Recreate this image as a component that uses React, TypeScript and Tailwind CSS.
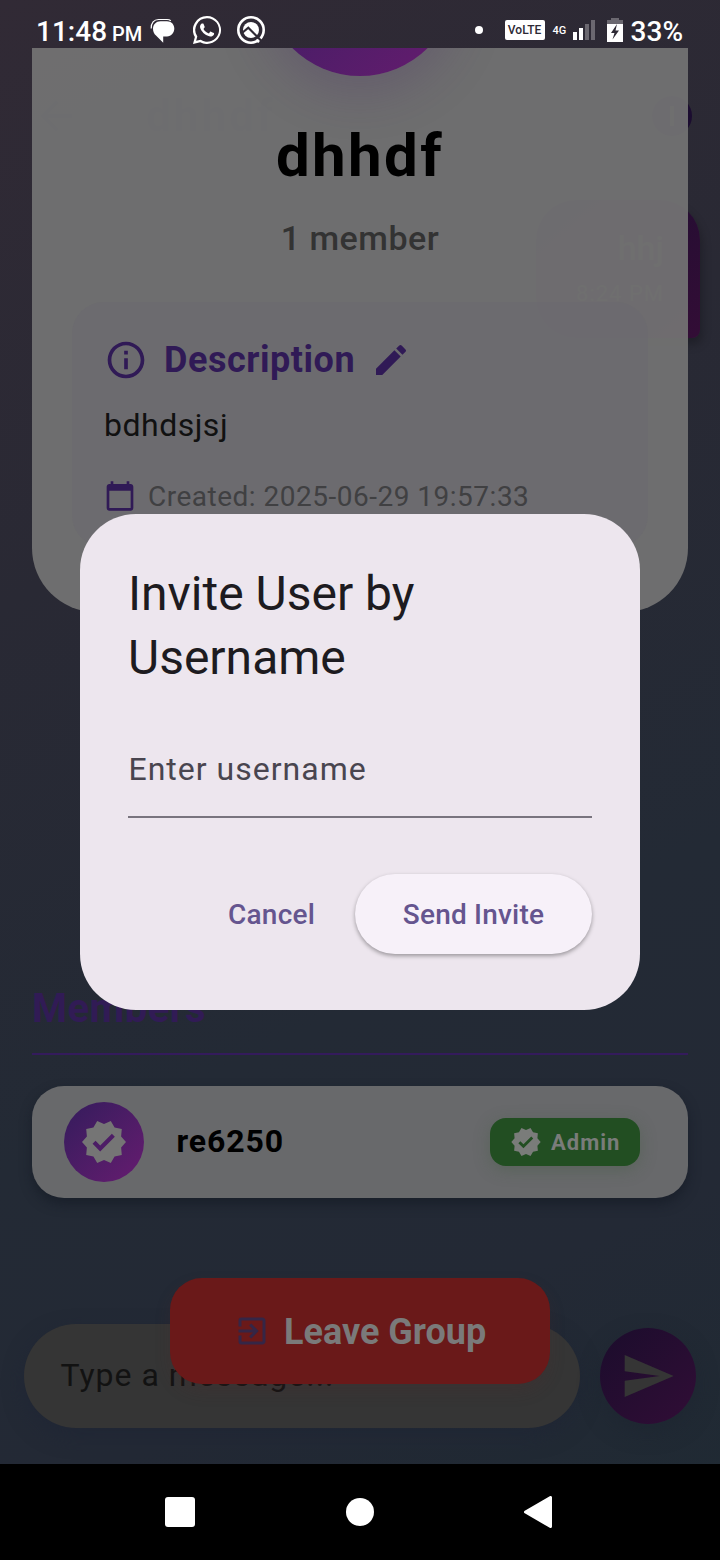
import { MdCalendarToday, MdEdit, MdExitToApp, MdInfoOutline, MdSend, MdVerified, MdArrowBack } from "react-icons/md";

function MessagesIcon() {
  return (
    <svg className="h-7 w-7" viewBox="0 0 28 28" fill="#fff">
      <path d="M2.200 12.500C2 7 5 3.500 9.500 3.500h8.500c1.600 0 2.800.4 3.800 1.200" fill="none" stroke="#fff" strokeWidth="1.200" />
      <path d="M11.500 5.300h6.500c4.300 0 7.300 3.200 7.300 7.200s-3 8-7.300 8h-3.800v6.200L7 19.500C5 17.800 4 15.500 4 12.700c0-4.200 3.200-7.400 7.500-7.400z" />
    </svg>
  );
}

function WhatsAppIcon() {
  return (
    <svg className="h-7 w-7" viewBox="0 0 24 24" fill="#fff">
      <path d="M17.472 14.382c-.297-.149-1.758-.867-2.030-.967-.273-.099-.471-.148-.670.150-.197.297-.767.966-.940 1.164-.173.199-.347.223-.644.075-.297-.150-1.255-.463-2.390-1.475-.883-.788-1.480-1.761-1.653-2.059-.173-.297-.018-.458.130-.606.134-.133.298-.347.446-.520.149-.174.198-.298.298-.497.099-.198.050-.371-.025-.520-.075-.149-.669-1.612-.916-2.207-.242-.579-.487-.500-.669-.510-.173-.008-.371-.010-.570-.010-.198 0-.520.074-.792.372-.272.297-1.040 1.016-1.040 2.479 0 1.462 1.065 2.875 1.213 3.074.149.198 2.096 3.200 5.077 4.487.709.306 1.262.489 1.694.625.712.227 1.360.195 1.871.118.571-.085 1.758-.719 2.006-1.413.248-.694.248-1.289.173-1.413-.074-.124-.272-.198-.570-.347z" />
      <path d="M12 0a12 12 0 0 0-10.400 18L0 24l6.200-1.500A12 12 0 1 0 12 0zm0 1.900a10.100 10.100 0 1 1-5.400 18.500L2.700 21.300 3.700 17.600A10.100 10.100 0 0 1 12 1.900z" />
    </svg>
  );
}

function RingIcon() {
  return (
    <svg className="h-7 w-7" viewBox="0 0 28 28" fill="none">
      <circle cx="14" cy="14" r="12.700" stroke="#fff" strokeWidth="2.600" />
      <circle cx="14" cy="14" r="8" fill="#fff" />
      <path d="M5 17l6.300-5.300L24.500 25" stroke="#2f2a35" strokeWidth="2.200" />
      <path d="M19.500 23.500l2.400 2.800" stroke="#fff" strokeWidth="2" />
    </svg>
  );
}

function StatusBar() {
  return (
    <div className="absolute inset-x-0 top-0 flex h-12 items-start text-white">
      <div className="ml-9 mt-4 flex items-baseline font-medium leading-8">
        <span className="text-[28px]">11:48</span>
        <span className="ml-[5px] text-[20px]">PM</span>
      </div>
      <div className="ml-[7px] mt-4 flex gap-[16px]">
        <MessagesIcon />
        <WhatsAppIcon />
        <RingIcon />
      </div>
      <div className="ml-auto mr-[37px] flex items-center pt-[14px]">
        <div className="mr-[22px] h-2 w-2 rounded-full bg-white" />
        <div className="flex h-5 w-10 items-center justify-center rounded-[2px] bg-white text-[12px] font-medium text-[#2d2934]">VoLTE</div>
        <div className="ml-2 w-[15px] pt-[2px] text-[11px] font-medium">4G</div>
        <svg className="ml-[5px] h-5 w-[22px]" viewBox="0 0 22 20">
          <path d="M0 12h4v8H0zM6 8h4v12H6z" fill="#fff" />
          <path d="M12 4h4v16h-4zM18 0h4v20h-4z" fill="#6b6870" />
        </svg>
        <svg className="ml-3 h-6 w-4" viewBox="0 0 16 24">
          <path d="M4 0h8v2h4v5H0V2h4z" fill="#6b6870" />
          <path d="M0 6h16v18H0z" fill="#fff" />
          <path d="M10 6L4 15h3.500L5.500 21.500 12 12.500H8.500z" fill="#2d2934" />
        </svg>
        <div className="ml-2 pt-1 text-[28px] font-medium leading-7">33%</div>
      </div>
    </div>
  );
}

function ChatScreen() {
  return (
    <div className="absolute inset-0 flex flex-col bg-linear-[155deg,#312a35_0%,#292934_32%,#232a35_62%,#232935_80%,#1f2a33_100%]">
      <div className="mt-[88px] flex h-14 items-center pl-8 pr-7">
        <MdArrowBack className="size-12 text-[#181830]" />
        <span className="ml-[66px] text-[44px] font-bold tracking-[3px] text-[#181838]">dhhdf</span>
        <span className="ml-auto flex size-10 items-center justify-center rounded-full bg-[#1b0c30]">
          <span className="h-5 w-1 bg-[#30303c]" />
        </span>
      </div>
      <div className="ml-auto mr-5 mt-14 flex h-[138px] w-[164px] flex-col items-end rounded-[40px] rounded-br-[8px] bg-linear-to-br from-[#1b0c30] to-[#330d36] pr-9 pt-[26px] text-[#353535] shadow-[2px_6px_10px_rgba(0,0,0,0.25)]">
        <span className="text-[34px] font-medium leading-[44px]">hhj</span>
        <span className="mt-[10px] text-[22px] leading-[28px] tracking-[1px]">8:24 PM</span>
      </div>
      <div className="mt-auto flex h-[140px] items-start pl-6 pr-6">
        <div className="flex h-[104px] w-[556px] items-center rounded-full bg-[#353535] pb-[2px] pl-[36.500px] text-[32px] tracking-[1px] text-[#121212] shadow-[0_8px_20px_rgba(31,38,52,0.8)]">Type a message...</div>
        <div className="ml-5 mt-1 flex size-24 items-center justify-center rounded-full bg-linear-to-br from-[#1b0c2c] to-[#310d36] shadow-[0_8px_20px_rgba(28,36,48,0.6)]">
          <MdSend className="size-14 text-[#353535]" />
        </div>
      </div>
      <div className="h-24 shrink-0" />
    </div>
  );
}

function GroupCard() {
  return (
    <div className="flex h-[564px] flex-col items-center overflow-hidden rounded-b-[64px] bg-[rgba(115,115,115,0.94)] px-10">
      <div className="-mt-[164px] size-[192px] shrink-0 rounded-full bg-linear-to-br from-[#341b62] to-[#661b6e] shadow-[0_16px_48px_rgba(72,40,100,0.25)]" />
      <div className="mt-[44px] text-[60px] font-bold leading-[72px] tracking-[2.400px] text-black">dhhdf</div>
      <div className="mt-[26px] text-[34px] font-medium leading-10 tracking-[0.500px] text-[#333333]">1 member</div>
      <div className="mt-[44px] flex h-[245px] w-full shrink-0 flex-col rounded-[32px] bg-[#6b6a6f]/90 px-8 pt-[33px] text-[#301a56]">
        <div className="flex h-[50px] items-center">
          <MdInfoOutline className="size-11" />
          <span className="ml-4 text-[36px] font-bold tracking-[0.540px]">Description</span>
          <MdEdit className="ml-4 size-10" />
        </div>
        <div className="mt-5 text-[32px] leading-10 tracking-[0.500px] text-[#111111]">bdhdsjsj</div>
        <div className="mt-[35px] flex h-8 items-center">
          <MdCalendarToday className="size-8" />
          <span className="ml-3 pt-[2px] text-[28px] tracking-[0.500px] text-[#404042]">Created: 2025-06-29 19:57:33</span>
        </div>
      </div>
    </div>
  );
}

function GroupSheet() {
  return (
    <div className="absolute inset-x-0 top-12 flex flex-col px-8">
      <GroupCard />
      <div className="mt-[373px] text-[40px] font-bold leading-[48px] tracking-[0.500px] text-[#311b55]">Members</div>
      <div className="mt-[20px] h-[2px] bg-[#341b5c]" />
      <div className="mt-[31px] flex h-28 items-center rounded-[32px] bg-[#68696b] pl-8 pr-12 shadow-[0_6px_12px_rgba(16,22,32,0.5)]">
        <div className="flex size-20 items-center justify-center rounded-full bg-linear-to-br from-[#341b5c] to-[#661b70]">
          <MdVerified className="size-12 text-[#757575]" />
        </div>
        <span className="ml-[32.500px] pb-[2px] text-[32px] font-bold tracking-[0.900px] text-black">re6250</span>
        <div className="ml-auto flex h-12 w-[150px] items-center rounded-[16px] bg-[#224e22] pl-5 text-[#7a7c7a] shadow-[0_4px_16px_rgba(60,90,60,0.35)]">
          <MdVerified className="size-8" />
          <span className="ml-[9px] text-[22px] font-bold tracking-[1px]">Admin</span>
        </div>
      </div>
      <div className="mt-20 flex h-[106px] w-[380px] items-center self-center rounded-[32px] bg-[#6a1919] pl-16 text-[#7a7a7a] shadow-[0_8px_16px_rgba(80,40,40,0.2)]">
        <MdExitToApp className="size-9 text-[#352646]" />
        <span className="ml-[14px] pt-[2px] text-[36px] font-bold">Leave Group</span>
      </div>
    </div>
  );
}

function InviteDialog() {
  return (
    <div className="absolute left-20 top-[514px] flex h-[496px] w-[560px] flex-col rounded-[56px] bg-[#ede6ee] px-12 pt-12">
      <h1 className="text-[48px] leading-[64px] text-[#1d1b20]">
        Invite User by
        <br />
        Username
      </h1>
      <div className="mt-8 flex h-24 items-center border-b-2 border-[#79747e] pl-[0.500px] text-[32px] tracking-[1px] text-[#49454f]">Enter username</div>
      <div className="mt-14 flex h-20 items-center justify-end text-[28px] font-medium tracking-[0.200px] text-[#65558f]">
        <button className="mr-10 pt-[2px]">Cancel</button>
        <button className="h-20 w-[237px] rounded-full bg-[#f7f1f9] pt-[2px] shadow-[0_2px_4px_rgba(0,0,0,0.35)]">Send Invite</button>
      </div>
    </div>
  );
}

function NavigationBar() {
  return (
    <div className="absolute inset-x-0 bottom-0 grid h-24 grid-cols-[90px_180px_180px_180px_90px] items-center bg-black">
      <div className="col-start-2 size-[30px] justify-self-center rounded-[3px] bg-white" />
      <div className="size-7 justify-self-center rounded-full bg-white" />
      <svg className="mr-[4px] h-8 w-7 justify-self-center" viewBox="0 0 28 32">
        <path d="M1.500 16L26.500 1.500v29z" fill="#fff" stroke="#fff" strokeWidth="3" strokeLinejoin="round" />
      </svg>
    </div>
  );
}

export default function App() {
  return (
    <div className="relative h-[1560px] w-[720px] overflow-hidden whitespace-nowrap font-['Roboto',sans-serif]">
      <ChatScreen />
      <GroupSheet />
      <InviteDialog />
      <StatusBar />
      <NavigationBar />
    </div>
  );
}
